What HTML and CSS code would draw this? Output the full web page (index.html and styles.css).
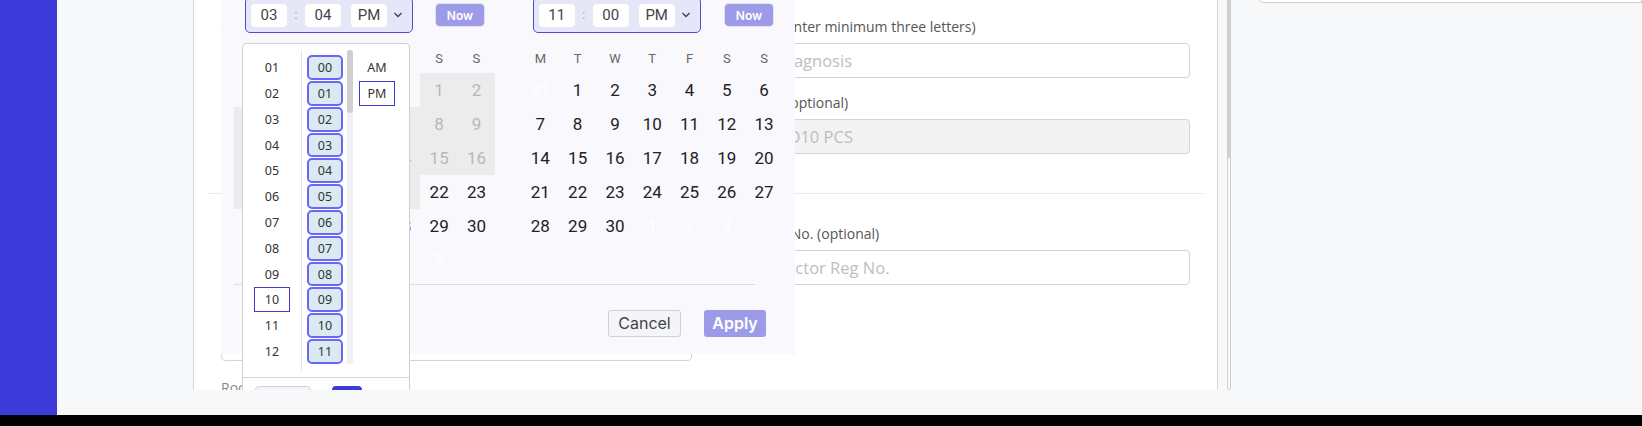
FILE: index.html
```html
<!DOCTYPE html>
<html lang="en">
<head>
<meta charset="utf-8">
<title>Claim form</title>
<link rel="stylesheet" href="styles.css">
</head>
<body>
<div class="app">
  <aside class="sidebar"></aside>
  <main class="main">
    <section class="card">
      <div class="form">
        <div class="grid grid-top">
          <div class="field">
            <div class="label">Admission - Discharge Date</div>
            <div class="input">03 Jun 2024 - 11 Jul 2024</div>
          </div>
          <div class="field">
            <div class="label">Diagnosis (enter minimum three letters)</div>
            <div class="input placeholder">Select Diagnosis</div>
          </div>
          <div class="field">
            <div class="label">Hospital Name</div>
            <div class="input placeholder">Enter Hospital Name</div>
          </div>
          <div class="field">
            <div class="label">ICD10 PCS (optional)</div>
            <div class="input placeholder disabled">Enter ICD10 PCS</div>
          </div>
        </div>
        <div class="divider"></div>
        <div class="grid">
          <div class="field">
            <div class="label">Remarks</div>
            <div class="input textarea"></div>
            <div class="label room">Room Type</div>
          </div>
          <div class="field">
            <div class="label">Doctor Reg No. (optional)</div>
            <div class="input placeholder">Enter Doctor Reg No.</div>
          </div>
        </div>
      </div>

      <div class="picker">
        <div class="cals">
          <div class="cal">
            <div class="cal-top">
              <div class="tgroup">
                <span class="tbox">03</span><span class="tcolon">:</span><span class="tbox">04</span><span class="tbox ampm">PM</span>
                <svg class="chev" width="12" height="8" viewBox="0 0 12 8"><path d="M2.5 2 L6 5.5 L9.5 2" fill="none" stroke="#444" stroke-width="1.4"/></svg>
              </div>
              <button class="now">Now</button>
            </div>
            <div class="dow"><span>M</span><span>T</span><span>W</span><span>T</span><span>F</span><span>S</span><span>S</span></div>
            <div class="days">
              <span class="off">27</span><span class="off">28</span><span class="off">29</span><span class="off">30</span><span class="off">31</span><span class="dis">1</span><span class="dis">2</span>
              <span class="dis">3</span><span class="dis">4</span><span class="dis">5</span><span class="dis">6</span><span class="dis">7</span><span class="dis">8</span><span class="dis">9</span>
              <span class="dis">10</span><span class="dis">11</span><span class="dis">12</span><span class="dis">13</span><span class="dis">14</span><span class="dis">15</span><span class="dis">16</span>
              <span class="dis">17</span><span class="dis">18</span><span class="dis">19</span><span class="dis">20</span><span class="dis">21</span><span>22</span><span>23</span>
              <span>24</span><span>25</span><span>26</span><span>27</span><span>28</span><span>29</span><span>30</span>
              <span></span><span></span><span></span><span></span><span></span><span class="off">5</span><span></span>
            </div>
          </div>
          <div class="cal">
            <div class="cal-top">
              <div class="tgroup">
                <span class="tbox">11</span><span class="tcolon">:</span><span class="tbox">00</span><span class="tbox ampm">PM</span>
                <svg class="chev" width="12" height="8" viewBox="0 0 12 8"><path d="M2.5 2 L6 5.5 L9.5 2" fill="none" stroke="#444" stroke-width="1.4"/></svg>
              </div>
              <button class="now now-right">Now</button>
            </div>
            <div class="dow"><span>M</span><span>T</span><span>W</span><span>T</span><span>F</span><span>S</span><span>S</span></div>
            <div class="days">
              <span class="off">31</span><span>1</span><span>2</span><span>3</span><span>4</span><span>5</span><span>6</span>
              <span>7</span><span>8</span><span>9</span><span>10</span><span>11</span><span>12</span><span>13</span>
              <span>14</span><span>15</span><span>16</span><span>17</span><span>18</span><span>19</span><span>20</span>
              <span>21</span><span>22</span><span>23</span><span>24</span><span>25</span><span>26</span><span>27</span>
              <span>28</span><span>29</span><span>30</span><span class="off">1</span><span class="off">2</span><span class="off">3</span><span></span>
              <span></span><span></span><span></span><span></span><span></span><span></span><span></span>
            </div>
          </div>
        </div>
        <div class="picker-line"></div>
        <div class="picker-actions">
          <button class="btn-cancel">Cancel</button>
          <button class="btn-apply">Apply</button>
        </div>

        <div class="timelist">
          <div class="tl-cols">
            <div class="tl-hours">
              <span class="tl-item">01</span><span class="tl-item">02</span><span class="tl-item">03</span><span class="tl-item">04</span>
              <span class="tl-item">05</span><span class="tl-item">06</span><span class="tl-item">07</span><span class="tl-item">08</span>
              <span class="tl-item">09</span><span class="tl-item tl-sel">10</span><span class="tl-item">11</span><span class="tl-item">12</span>
            </div>
            <div class="tl-mins">
              <div class="tl-minlist">
                <span class="tl-min">00</span><span class="tl-min">01</span><span class="tl-min">02</span><span class="tl-min">03</span>
                <span class="tl-min">04</span><span class="tl-min">05</span><span class="tl-min">06</span><span class="tl-min">07</span>
                <span class="tl-min">08</span><span class="tl-min">09</span><span class="tl-min">10</span><span class="tl-min">11</span>
                <span class="tl-min">12</span><span class="tl-min">13</span>
              </div>
              <div class="tl-scroll"><div class="tl-thumb"></div></div>
            </div>
            <div class="tl-ampm">
              <span class="tl-item">AM</span><span class="tl-item tl-sel">PM</span>
            </div>
          </div>
          <div class="tl-foot">
            <button class="tl-btn-light"></button>
            <button class="tl-btn-blue"></button>
          </div>
        </div>
      </div>
    </section>
    <div class="scrollbar"><div class="thumb"></div></div>
    <div class="sidebox"></div>
  </main>
</div>
<div class="bottom-bar"></div>
</body>
</html>
```

FILE: styles.css
```css
* { box-sizing: border-box; }
html, body { margin: 0; padding: 0; }
body {
  width: 1642px;
  height: 426px;
  overflow: hidden;
  background: #f7f8fa;
  font-family: "Open Sans", "Noto Sans", sans-serif;
}
button { font: inherit; border: none; padding: 0; margin: 0; cursor: pointer; }

.app { display: flex; height: 415px; }
.sidebar { width: 57px; background: #3c3bd9; flex: none; }
.main {
  flex: 1;
  display: flex;
  align-items: flex-start;
  background: #f7f8fa;
  min-width: 0;
}
.bottom-bar { height: 11px; background: #000; }

.card {
  position: relative;
  margin-left: 136px;
  width: 1025px;
  height: 390px;
  flex: none;
  background: #fff;
  border-left: 1px solid #d6d6d6;
  border-right: 1px solid #d6d6d6;
  overflow: hidden;
}
.form { padding: 17.7px 27px 0 27px; }
.grid {
  display: grid;
  grid-template-columns: 471px 475px;
  column-gap: 23px;
  row-gap: 16.6px;
}
.label {
  font-size: 14px;
  line-height: 18px;
  color: #555;
  margin-bottom: 7px;
  white-space: nowrap;
}
.input {
  height: 35px;
  border: 1px solid #d4d4d4;
  border-radius: 4px;
  padding: 0 12px;
  font-size: 16.5px;
  line-height: 33px;
  color: #333;
  background: #fff;
  white-space: nowrap;
  overflow: hidden;
}
.placeholder { color: #bdbdbd; }
.disabled { background: #f3f3f3; }
.textarea { height: 110.7px; }
.room { margin-top: 18px; color: #888; }
.divider {
  height: 1px;
  background: #e8e8e8;
  margin: 39px -14px 31px -13px;
}

/* date range picker overlay */
.picker {
  position: absolute;
  left: 27px;
  top: -3px;
  width: 574px;
  padding: 0 0 17.3px 13px;
  background: #f8f8fd;
  z-index: 5;
  font-family: Roboto, "Liberation Sans", sans-serif;
}
.cals { display: flex; gap: 26.6px; }
.cal { width: 261.1px; flex: none; }
.cal-top { display: flex; align-items: center; height: 36px; padding-left: 11px; }
.tgroup {
  display: flex;
  align-items: center;
  height: 36px;
  border: 1px solid #4b4bdc;
  border-radius: 5px;
  background: #e6e6f9;
  padding: 0 8px 0 5px;
}
.tbox {
  width: 36px;
  height: 23px;
  background: #fff;
  border-radius: 4px;
  text-align: center;
  font-size: 15px;
  line-height: 23px;
  color: #444;
}
.tcolon { width: 18px; text-align: center; color: #a0a0a0; font-size: 12px; line-height: 23px; }
.ampm { margin-left: 10px; }
.chev { margin-left: 5px; display: block; }
.now {
  margin-left: 22.7px;
  width: 48.6px;
  height: 22px;
  border-radius: 4px;
  background: #9d9be8;
  box-shadow: 0 0 0 1px rgba(120, 120, 160, 0.18);
  color: #fff;
  font-family: Inter, "Open Sans", sans-serif;
  font-weight: 600;
  font-size: 12px;
}
.now-right { margin-left: 24px; }
.dow {
  display: grid;
  grid-template-columns: repeat(7, 37.3px);
  margin-top: 12px;
  height: 28px;
  line-height: 28px;
  font-size: 13px;
  color: #666;
  text-align: center;
}
.days {
  display: grid;
  grid-template-columns: repeat(7, 37.3px);
  grid-auto-rows: 34px;
  font-size: 17px;
  line-height: 34px;
  color: #222;
  text-align: center;
}
.days .dis { background: #ececec; color: #b8b8b8; }
.days .off { color: #fff; }
.picker-line { width: 521px; height: 1px; background: #dcdce0; margin-top: 6.7px; }
.picker-actions {
  display: flex;
  justify-content: flex-end;
  gap: 23.3px;
  margin-top: 25.6px;
  padding-right: 29px;
  font-family: Inter, "Open Sans", sans-serif;
}
.btn-cancel {
  width: 72.4px;
  height: 26.4px;
  border: 1px solid #cfd0d6;
  border-radius: 3px;
  background: #f4f5f8;
  color: #444;
  font-size: 16px;
}
.btn-apply {
  width: 62px;
  height: 26.4px;
  border-radius: 3px;
  background: #9d9be8;
  color: #fff;
  font-size: 16px;
  font-weight: 600;
}

/* time dropdown overlay */
.timelist {
  position: absolute;
  left: 21.3px;
  top: 46.3px;
  width: 167.4px;
  background: #fff;
  border: 1px solid #cfcfcf;
  border-radius: 4px;
  z-index: 6;
  font-family: "Noto Sans", "Open Sans", sans-serif;
  font-size: 12.5px;
  color: #333;
}
.tl-cols {
  display: flex;
  height: 334px;
  padding: 6px 0;
  border-bottom: 1px solid #d5d5d5;
}
.tl-hours, .tl-ampm {
  display: flex;
  flex-direction: column;
  align-items: center;
  padding-top: 5px;
  overflow: hidden;
}
.tl-hours { width: 57.4px; }
.tl-ampm { width: 48.6px; }
.tl-item {
  flex: none;
  width: 36px;
  height: 24.8px;
  margin-bottom: 1px;
  padding-top: 1px;
  line-height: 22.8px;
  text-align: center;
  border: 1px solid transparent;
}
.tl-sel { border-color: #3c3bd9; }
.tl-mins {
  display: flex;
  border-left: 1px solid #e6e6e6;
  padding-left: 5.6px;
  overflow: hidden;
}
.tl-minlist {
  display: flex;
  flex-direction: column;
  width: 35.4px;
  padding-top: 5px;
  height: 314px;
  overflow: hidden;
}
.tl-min {
  flex: none;
  height: 24.8px;
  margin-bottom: 1px;
  border: 2px solid #6a66f8;
  border-radius: 5px;
  background: #dbeaf2;
  text-align: center;
  line-height: 21.8px;
}
.tl-scroll {
  margin-left: 4px;
  width: 6px;
  height: 314px;
  background: #eef0f4;
  border-radius: 3px;
}
.tl-thumb { height: 62.4px; background: #cfcfcf; border-radius: 3px; }
.tl-foot { display: flex; gap: 21px; padding: 7.7px 0 0 11.7px; height: 44px; }
.tl-btn-light {
  width: 55.7px;
  height: 28px;
  background: #f3f4f6;
  border: 1px solid #cfd3d8;
  border-radius: 4px;
}
.tl-btn-blue {
  width: 30.6px;
  height: 28px;
  background: #3c3bd9;
  border-radius: 4px;
}

/* page scrollbar and side panel */
.scrollbar {
  margin-left: 9px;
  width: 4px;
  height: 390px;
  flex: none;
  border: 1px solid #d0d0d0;
  border-top: none;
  border-radius: 0 0 2px 2px;
}
.thumb { height: 158px; margin: 0 -1px; background: #d0d0d0; }
.sidebox {
  flex: 1;
  margin-left: 27px;
  margin-top: -10px;
  height: 13px;
  background: #fff;
  border: 1px solid #d0d0d0;
  border-radius: 0 0 0 6px;
}
```
